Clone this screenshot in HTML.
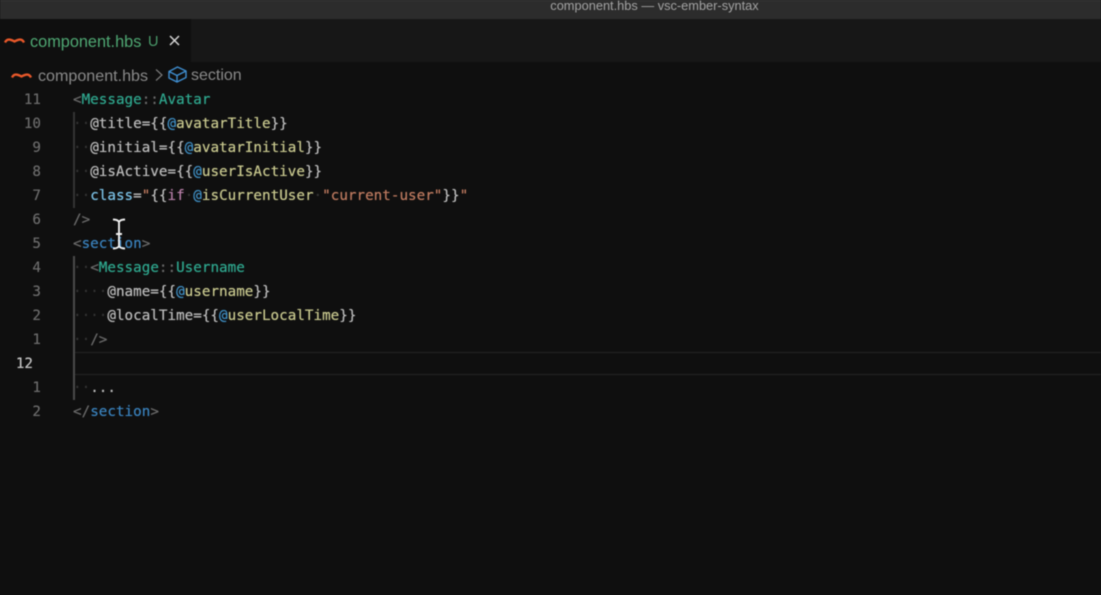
<!DOCTYPE html>
<html>
<head>
<meta charset="utf-8">
<style>
html,body{margin:0;padding:0;width:1101px;height:595px;overflow:hidden;background:#0f0f0f}
#root{position:relative;width:1101px;height:595px;overflow:hidden;background:#0f0f0f;filter:blur(.5px)}
.abs{position:absolute}
.sans{font-family:"Liberation Sans",sans-serif;white-space:nowrap}
.ln{position:absolute;left:0;width:41px;text-align:right;font:14.27px/24px "DejaVu Sans Mono",monospace;color:#6b6b6b;text-shadow:0 0 .4px currentColor}
.c{position:absolute;white-space:pre;font:14.27px/24px "DejaVu Sans Mono",monospace;color:#bcbcbc;text-shadow:0 0 .5px currentColor}
.t{color:#2fa78e}.g{color:#6a6a6a}.b{color:#3f8fc4}.y{color:#c9c98f}.s{color:#bf7b60}.p{color:#b77fa8}.lb{color:#7cc3e8}.d{color:#333}.bl{color:#3a82bd}
.guide{position:absolute;width:1px;background:#333}
</style>
</head>
<body>
<div id="root">
  <div class="abs" style="left:0;top:0;width:1101px;height:19px;background:#2c2c2c;border-top:1px solid #3a3a3a;box-sizing:border-box"></div>
  <div class="abs sans" style="left:0;width:1101px;top:-1px;padding-left:208px;box-sizing:border-box;text-align:center;font-size:12.8px;line-height:13px;color:#a3a3a3;">component.hbs — vsc-ember-syntax</div>

  <div class="abs" style="left:0;top:19px;width:1101px;height:43px;background:#171717"></div>
  <div class="abs" style="left:0;top:19px;width:191px;height:43px;background:#0f0f0f"></div>

  <svg class="abs" style="left:4px;top:36px" width="21" height="10" viewBox="0 0 21 10"><path d="M1 6.5C3 2.5 6 3 10.5 5.5C15 3 18 2.5 20 6.5" fill="none" stroke="#e8582a" stroke-width="2.4"/></svg>
  <div class="abs sans" style="left:30px;top:33px;font-size:16.3px;line-height:18px;color:#4fa873">component.hbs</div>
  <div class="abs sans" style="left:148px;top:33px;font-size:14.5px;line-height:18px;color:#4a9a6a">U</div>
  <svg class="abs" style="left:168px;top:34px" width="13" height="13" viewBox="0 0 13 13"><path d="M2 2L11 11M11 2L2 11" stroke="#d5d5d5" stroke-width="1.5"/></svg>

  <svg class="abs" style="left:11px;top:71px" width="21" height="10" viewBox="0 0 21 10"><path d="M1 6.5C3 2.5 6 3 10.5 5.5C15 3 18 2.5 20 6.5" fill="none" stroke="#e8582a" stroke-width="2.4"/></svg>
  <div class="abs sans" style="left:38px;top:67px;font-size:16.1px;line-height:18px;color:#8a8a8a">component.hbs</div>
  <svg class="abs" style="left:154px;top:68px" width="10" height="14" viewBox="0 0 10 14"><path d="M2 1.5L8 7L2 12.5" fill="none" stroke="#7a7a7a" stroke-width="1.2"/></svg>
  <svg class="abs" style="left:168px;top:66px" width="19" height="17" viewBox="0 0 19 17"><path d="M9.5 1L18 5V11.5L9 16L1 12V5.5ZM1 5.5L9 9.5L18 5M9 9.5V16" fill="none" stroke="#3f8ed0" stroke-width="1.4" stroke-linejoin="round"/></svg>
  <div class="abs sans" style="left:191px;top:67px;font-size:16px;line-height:18px;color:#8a8a8a">section</div>

  <div class="abs" style="left:74px;top:352px;width:1027px;height:1px;background:#242424"></div>
  <div class="abs" style="left:74px;top:374px;width:1027px;height:1px;background:#242424"></div>
  <div class="guide" style="left:73px;top:112px;height:96px;width:1.5px"></div>
  <div class="guide" style="left:73px;top:256px;height:144px;width:2px;background:#4a4a4a"></div>

  <div class="ln" style="top:88px">11</div>
  <div class="ln" style="top:112px">10</div>
  <div class="ln" style="top:136px">9</div>
  <div class="ln" style="top:160px">8</div>
  <div class="ln" style="top:184px">7</div>
  <div class="ln" style="top:208px">6</div>
  <div class="ln" style="top:232px">5</div>
  <div class="ln" style="top:256px">4</div>
  <div class="ln" style="top:280px">3</div>
  <div class="ln" style="top:304px">2</div>
  <div class="ln" style="top:328px">1</div>
  <div class="ln" style="top:352px;width:33px;color:#c6c6c6">12</div>
  <div class="ln" style="top:376px">1</div>
  <div class="ln" style="top:400px">2</div>

  <div class="c" style="left:73px;top:88px"><span class="g">&lt;</span><span class="t">Message</span><span class="g">::</span><span class="t">Avatar</span></div>
  <div class="c" style="left:73px;top:112px"><span class="d">··</span>@title={{<span class="b">@</span><span class="y">avatarTitle</span>}}</div>
  <div class="c" style="left:73px;top:136px"><span class="d">··</span>@initial={{<span class="b">@</span><span class="y">avatarInitial</span>}}</div>
  <div class="c" style="left:73px;top:160px"><span class="d">··</span>@isActive={{<span class="b">@</span><span class="y">userIsActive</span>}}</div>
  <div class="c" style="left:73px;top:184px"><span class="d">··</span><span class="lb">class</span>=<span class="s">"</span>{{<span class="p">if</span><span class="d">·</span><span class="b">@</span><span class="y">isCurrentUser</span><span class="d">·</span><span class="s">"current-user"</span>}}<span class="s">"</span></div>
  <div class="c" style="left:73px;top:208px"><span class="g">/&gt;</span></div>
  <div class="c" style="left:73px;top:232px"><span class="g">&lt;</span><span class="bl">section</span><span class="g">&gt;</span></div>
  <div class="c" style="left:73px;top:256px"><span class="d">··</span><span class="g">&lt;</span><span class="t">Message</span><span class="g">::</span><span class="t">Username</span></div>
  <div class="c" style="left:73px;top:280px"><span class="d">····</span>@name={{<span class="b">@</span><span class="y">username</span>}}</div>
  <div class="c" style="left:73px;top:304px"><span class="d">····</span>@localTime={{<span class="b">@</span><span class="y">userLocalTime</span>}}</div>
  <div class="c" style="left:73px;top:328px"><span class="d">··</span><span class="g">/&gt;</span></div>
  <div class="c" style="left:73px;top:376px"><span class="d">··</span>...</div>
  <div class="c" style="left:73px;top:400px"><span class="g">&lt;/</span><span class="bl">section</span><span class="g">&gt;</span></div>

  <svg class="abs" style="left:110px;top:217px" width="18" height="34" viewBox="0 0 18 34"><path d="M3 2.5C6 2.5 8 3 9 5C10 3 12 2.5 15 2.5M9 5V29M3 31.5C6 31.5 8 31 9 29C10 31 12 31.5 15 31.5M6 17H12" fill="none" stroke="#f0f0f0" stroke-width="1.9"/></svg>
</div>
</body>
</html>
